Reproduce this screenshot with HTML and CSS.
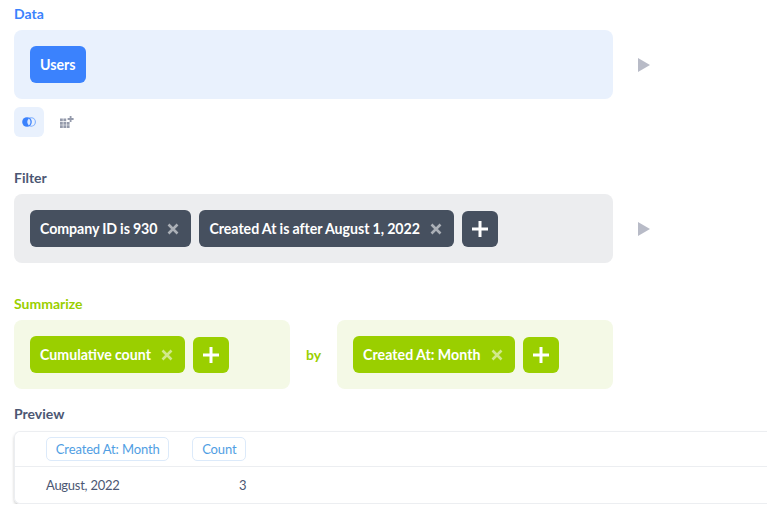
FILE: index.html
```html
<!DOCTYPE html>
<html lang="en">
<head>
    <meta charset="UTF-8">
    <meta name="viewport" content="width=device-width, initial-scale=1.0">
    <title>Notebook</title>
    <link rel="stylesheet" href="styles.css">
</head>
<body>
    <div class="notebook">
        <!-- data -->
        <div class="step step-data">
            <div class="step-title title-data">Data</div>
            <div class="step-row">
                <div class="step-box box-data">
                    <span class="chip chip-data">Users</span>
                </div>
                <svg class="run" viewBox="0 0 12 14"><path d="M0 0L12 7L0 14Z"/></svg>
            </div>
            <div class="step-tools">
                <span class="tool tool-on">
                    <svg width="14" height="10" viewBox="0 0 14 10">
                        <circle cx="9.2" cy="5" r="4.2" fill="none" stroke="#7fb0ff" stroke-width="1.1"/>
                        <circle cx="5" cy="5" r="4.8" fill="#3b82fd"/>
                        <path d="M6.8 1.600a4.200 4.200 0 0 1 0 6.800a5 5 0 0 1 0-6.800z" fill="#dbe8ff"/>
                    </svg>
                </span>
                <span class="tool tool-join">
                    <svg width="14" height="12" viewBox="0 0 14 12">
                        <path fill="#949aab" d="M0 2.500h2.800v2.800H0zM3.400 2.500h2.800v2.800H3.400zM0 5.900h2.800v2.800H0zM3.400 5.900h2.800v2.800H3.400zM6.800 5.900h2.800v2.800H6.800zM0 9.300h2.800V12H0zM3.400 9.300h2.800V12H3.400zM6.800 9.300h2.800V12H6.800z"/>
                        <path fill="#949aab" d="M9.700 0h1.800v2.100h2.100v1.800h-2.100V6H9.700V3.900H7.600V2.100h2.100z"/>
                    </svg>
                </span>
            </div>
        </div>

        <!-- filter -->
        <div class="step step-filter">
            <div class="step-title title-filter">Filter</div>
            <div class="step-row">
                <div class="step-box box-filter">
                    <span class="chip chip-filter chip-tight">Company ID is 930<svg class="x" viewBox="0 0 12 12"><path d="M1.500 1.500L10.500 10.500M10.500 1.500L1.500 10.500"/></svg></span>
                    <span class="chip chip-filter chip-snug">Created At is after August 1, 2022<svg class="x" viewBox="0 0 12 12"><path d="M1.500 1.500L10.500 10.500M10.500 1.500L1.500 10.500"/></svg></span>
                    <span class="add add-filter"><svg class="plus" viewBox="0 0 16 16"><path d="M8 0V16M0 8H16"/></svg></span>
                </div>
                <svg class="run" viewBox="0 0 12 14"><path d="M0 0L12 7L0 14Z"/></svg>
            </div>
        </div>

        <!-- summarize -->
        <div class="step step-sum">
            <div class="step-title title-sum">Summarize</div>
            <div class="sum-row">
                <div class="step-box box-sum">
                    <span class="chip chip-sum">Cumulative count<svg class="x" viewBox="0 0 12 12"><path d="M1.500 1.500L10.500 10.500M10.500 1.500L1.500 10.500"/></svg></span>
                    <span class="add add-sum"><svg class="plus" viewBox="0 0 16 16"><path d="M8 0V16M0 8H16"/></svg></span>
                </div>
                <div class="sum-by">by</div>
                <div class="step-box box-sum">
                    <span class="chip chip-sum chip-wide">Created At: Month<svg class="x" viewBox="0 0 12 12"><path d="M1.500 1.500L10.500 10.500M10.500 1.500L1.500 10.500"/></svg></span>
                    <span class="add add-sum"><svg class="plus" viewBox="0 0 16 16"><path d="M8 0V16M0 8H16"/></svg></span>
                </div>
            </div>
        </div>

        <!-- preview -->
        <div class="step-title title-preview">Preview</div>
        <div class="preview">
            <div class="preview-head">
                <span class="col col-month"><span class="col-tag">Created At: Month</span></span>
                <span class="col"><span class="col-tag">Count</span></span>
            </div>
            <div class="preview-row">
                <span class="cell-month">August, 2022</span>
                <span class="cell-count">3</span>
            </div>
        </div>
    </div>
</body>
</html>
```

FILE: styles.css
```css
*{ margin: 0; padding: 0; box-sizing: border-box;}
body{ overflow: hidden; background: #fff; font-family: Lato, "Open Sans", sans-serif; color: #4c5773;}

.notebook{ padding: 6px 0 0 14px;}
.step{ margin-bottom: 33px;}
.step-sum{ margin-bottom: 17px;}
.step-title{ height: 16px; line-height: 16px; font-size: 14px; font-weight: 700; margin-bottom: 8px;}
.title-data{ color: #3b82fd;}
.title-filter{ color: #4c5773;}
.title-sum{ color: #9acf00;}
.title-preview{ color: #4c5773; margin-bottom: 9px;}

.step-row{ display: flex; align-items: center;}
.step-box{ display: flex; align-items: center; gap: 8px; height: 69px; padding: 0 16px; border-radius: 8px;}
.step-row .step-box{ width: 599px;}
.box-data{ background: #e9f1fd;}
.box-filter{ background: #ecedef;}
.box-sum{ background: #f4f9e6; width: 276px;}

.run{ width: 12px; height: 14px; margin-left: 25px; fill: #b8bbc7;}

.chip{ display: flex; align-items: center; height: 37px; padding: 0 10px; border-radius: 6px; color: #fff; font-size: 14.2px; font-weight: 700; word-spacing: -.3px; white-space: nowrap;}
.chip-tight{ letter-spacing: -.06px;}
.chip-snug{ letter-spacing: -.03px;}
.chip-wide{ letter-spacing: .05px;}
.chip-data{ background: #3b82fd;}
.chip-filter{ background: #46505f;}
.chip-sum{ background: #9acf00;}

.x{ width: 12px; height: 12px; margin-left: 10px; margin-right: 2px; fill: none; stroke: #fff; stroke-opacity: .55; stroke-width: 2.600;}

.add{ display: flex; align-items: center; justify-content: center; width: 36px; height: 36px; border-radius: 6px;}
.add-filter{ background: #46505f;}
.add-sum{ background: #9acf00;}
.plus{ width: 16px; height: 16px; fill: none; stroke: #fff; stroke-width: 3;}

.step-tools{ display: flex; margin-top: 8px;}
.tool{ display: flex; align-items: center; justify-content: center; width: 30px; height: 30px; border-radius: 6px;}
.tool-join{ margin-left: 8px;}
.tool-on{ background: #e9f1fd;}

.sum-row{ display: flex; align-items: center;}
.sum-by{ width: 47px; text-align: center; font-size: 14px; font-weight: 700; color: #9acf00;}

.preview{ width: 760px; height: 73px; border: 1px solid #eceef1; border-right: 0; border-radius: 6px 0 0 6px; box-shadow: 0 2px 3px rgba(0,0,0,.2);}
.preview-head{ display: flex; align-items: center; height: 35px; padding-left: 31px; border-bottom: 1px solid #eceef1;}
.col{ display: block;}
.col-month{ margin-right: 23px;}
.col-tag{ display: block; height: 24px; line-height: 22px; padding: 0 8.800px; border: 1px solid #dceafa; border-radius: 5px; color: #509ee3; font-size: 13px; letter-spacing: -.01em; white-space: nowrap;}
.preview-row{ display: flex; align-items: center; height: 36px; padding-left: 31px; color: #4c5773; font-size: 13px; letter-spacing: -.02em;}
.cell-month{ width: 193px;}
.cell-count{ width: 0; white-space: nowrap;}
```
